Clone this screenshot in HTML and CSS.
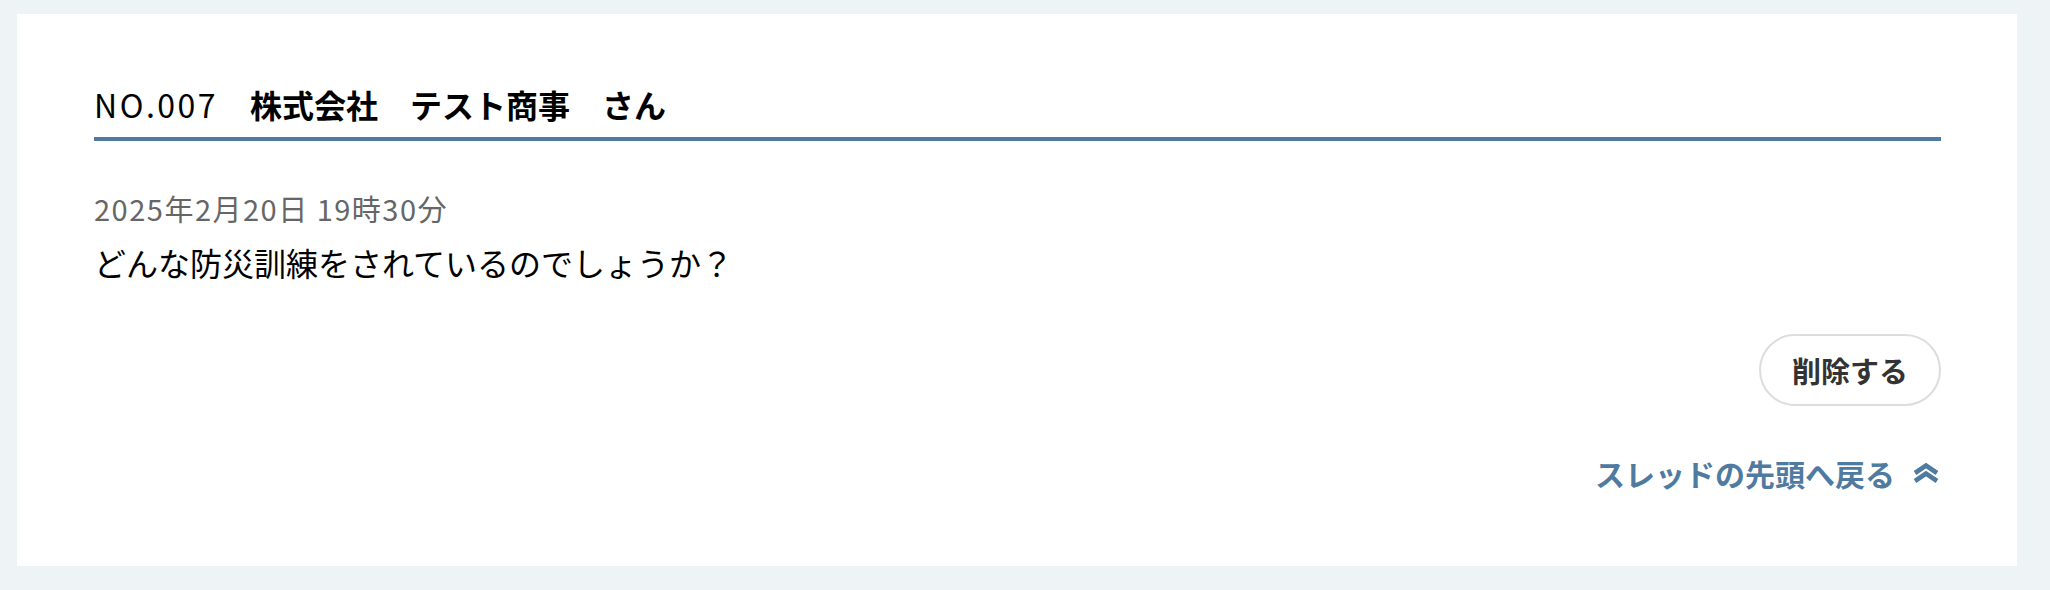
FILE: index.html
```html
<!DOCTYPE html>
<html lang="ja">
<head>
    <meta charset="UTF-8">
    <meta name="viewport" content="width=device-width, initial-scale=1.0">
    <title>スレッド</title>
    <link rel="stylesheet" href="styles.css">
</head>
<body>

    <div class="thread">
        <h2 class="post-head">
            <span class="post-no">NO.007</span>　<span class="post-name">株式会社　テスト商事　さん</span>
        </h2>

        <p class="post-date">2025年2月20日 19時30分</p>
        <p class="post-body">どんな防災訓練をされているのでしょうか？</p>

        <div class="post-actions">
            <button class="delete-button" type="button">削除する</button>
        </div>

        <div class="back-link">
            <a href="#top">
                スレッドの先頭へ戻る
                <svg class="back-icon" viewBox="0 0 26 21" width="26" height="21" aria-hidden="true">
                    <path d="M2 10 L13 2.5 L24 10" />
                    <path d="M2 18 L13 10.5 L24 18" />
                </svg>
            </a>
        </div>
    </div>

</body>
</html>
```

FILE: styles.css
```css
body {
    margin: 0;
    padding: 14px 0 0 17px;
    background-color: #eef3f6;
    font-family: "Noto Sans CJK JP", sans-serif;
    color: #000;
}

.thread {
    width: 2000px;
    box-sizing: border-box;
    padding: 66px 76px 71px 77px;
    background-color: #fff;
}

.post-head {
    margin: 0;
    padding-bottom: 9px;
    border-bottom: 4px solid #4f7ba1;
    font-size: 32px;
    line-height: 48px;
    font-weight: normal;
}

.post-no {
    letter-spacing: 2.5px;
}

.post-name {
    font-weight: bold;
}

.post-date {
    margin: 46px 0 0;
    font-size: 29px;
    line-height: 42px;
    letter-spacing: 1.5px;
    color: #666;
}

.post-body {
    margin: 9px 0 0;
    font-size: 32px;
    line-height: 48px;
}

.post-actions {
    display: flex;
    justify-content: flex-end;
    margin-top: 48px;
}

.delete-button {
    height: 72px;
    box-sizing: border-box;
    padding: 0 31px;
    border: 2px solid #ddd;
    border-radius: 36px;
    background-color: #fff;
    font-family: "Noto Sans CJK JP", sans-serif;
    font-size: 29px;
    line-height: 1;
    font-weight: bold;
    color: #333;
    cursor: pointer;
}

.back-link {
    display: flex;
    justify-content: flex-end;
    margin-top: 46px;
}

.back-link a {
    display: inline-flex;
    align-items: center;
    gap: 18px;
    font-size: 30px;
    line-height: 43px;
    font-weight: bold;
    color: #4f7ba1;
    text-decoration: none;
}

.back-icon {
    flex-shrink: 0;
    margin-right: 2px;
    fill: none;
    stroke: #4f7ba1;
    stroke-width: 4.6;
}
```
